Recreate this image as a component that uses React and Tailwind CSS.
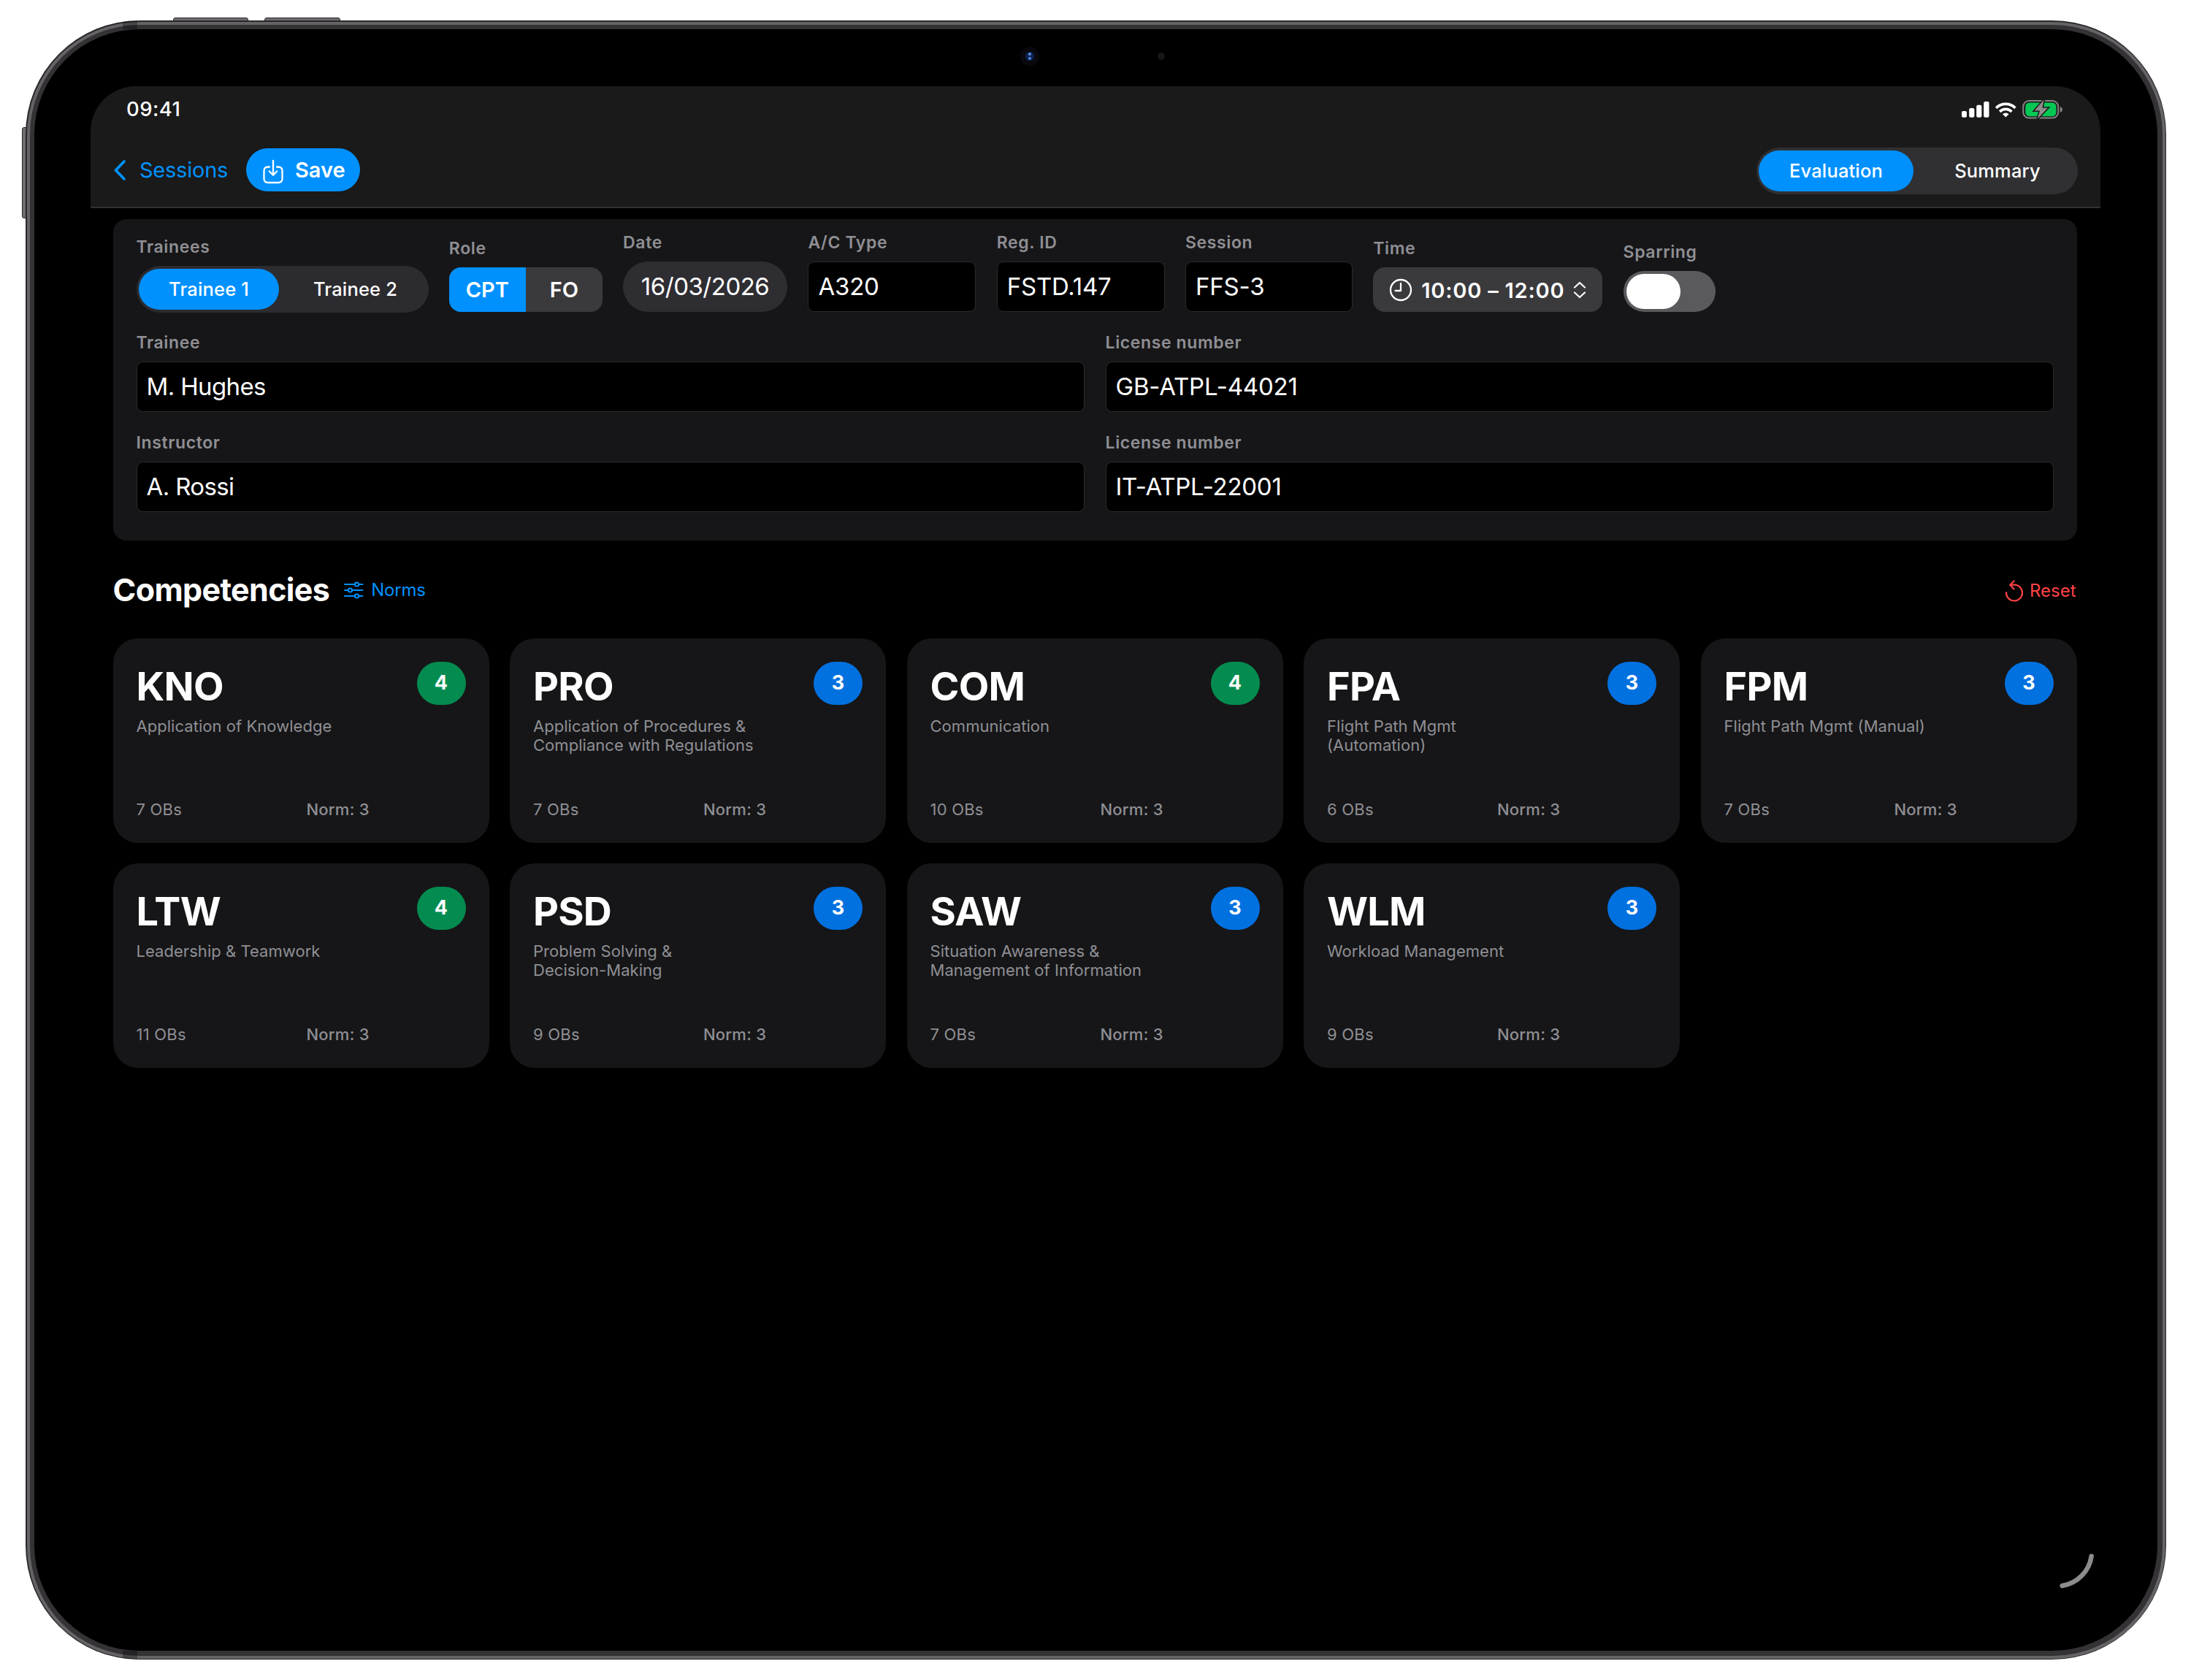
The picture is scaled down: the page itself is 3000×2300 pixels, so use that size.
import { useState } from "react";

const competencies = [
  { code: "KNO", name: ["Application of Knowledge"], obs: 7, norm: 3, grade: 4 },
  { code: "PRO", name: ["Application of Procedures &", "Compliance with Regulations"], obs: 7, norm: 3, grade: 3 },
  { code: "COM", name: ["Communication"], obs: 10, norm: 3, grade: 4 },
  { code: "FPA", name: ["Flight Path Mgmt", "(Automation)"], obs: 6, norm: 3, grade: 3 },
  { code: "FPM", name: ["Flight Path Mgmt (Manual)"], obs: 7, norm: 3, grade: 3 },
  { code: "LTW", name: ["Leadership & Teamwork"], obs: 11, norm: 3, grade: 4 },
  { code: "PSD", name: ["Problem Solving &", "Decision-Making"], obs: 9, norm: 3, grade: 3 },
  { code: "SAW", name: ["Situation Awareness &", "Management of Information"], obs: 7, norm: 3, grade: 3 },
  { code: "WLM", name: ["Workload Management"], obs: 9, norm: 3, grade: 3 },
];

function StatusIcons() {
  return (
    <svg width="140" height="28" viewBox="0 0 140 28" fill="none">
      <g fill="#fff">
        <rect x="0" y="17" width="7" height="8.7" rx="2" />
        <rect x="10.2" y="13" width="7.2" height="12.7" rx="2" />
        <rect x="20.2" y="8.7" width="7.2" height="17" rx="2" />
        <rect x="30.2" y="4" width="7.3" height="21.7" rx="2" />
      </g>
      <g stroke="#fff" strokeWidth="3.8">
        <path d="M47.2 12.8 A18.5 18.5 0 0 1 73.4 12.8" />
        <path d="M52.2 17.8 A11.5 11.5 0 0 1 68.4 17.8" />
      </g>
      <path d="M56 21.2 A6.2 6.2 0 0 1 64.6 21.2 L60.3 25.6 Z" fill="#fff" />
      <rect x="84.2" y="3" width="48" height="23.6" rx="8" stroke="#858282" strokeWidth="2" />
      <rect x="87.3" y="5.5" width="42.2" height="18.8" rx="5.5" fill="#04c853" />
      <path d="M134.6 11 q3.4 1.2 3.4 4 q0 2.8 -3.4 4 Z" fill="#858282" />
      <path d="M112.6 1.6 L99.6 16.4 H107 L103.8 27.6 L118 12.8 H110.4 Z" fill="#8f8c8c" stroke="#1a1a1a" strokeWidth="3" paintOrder="stroke" />
    </svg>
  );
}

function SaveIcon() {
  return (
    <svg className="mt-[4px]" width="28" height="34" viewBox="0 0 28 34" fill="none" stroke="#fff" strokeWidth="2.3" strokeLinecap="round" strokeLinejoin="round">
      <path d="M9 10.5 H7 Q1.5 10.5 1.5 16 V26.5 Q1.5 32 7 32 H21 Q26.5 32 26.5 26.5 V16 Q26.5 10.5 21 10.5 H19" />
      <path d="M14 2 V21.5 M8.8 16.5 L14 21.7 L19.2 16.5" />
    </svg>
  );
}

function ClockIcon() {
  return (
    <svg width="32" height="32" viewBox="0 0 32 32" fill="none" stroke="#fff" strokeWidth="2.3" strokeLinecap="round" strokeLinejoin="round">
      <circle cx="16" cy="16" r="14" />
      <path d="M16 7 V17 H8.5" />
    </svg>
  );
}

function SlidersIcon() {
  return (
    <svg width="28" height="24" viewBox="0 0 28 24" fill="none" stroke="#0091ff" strokeWidth="2" strokeLinecap="round">
      <path d="M2 4 H15.5 M21.5 4 H26.5 M2 12 H6.5 M12.5 12 H26.5 M2 20 H15.5 M21.5 20 H26.5" />
      <circle cx="18.5" cy="4" r="2.6" />
      <circle cx="9.5" cy="12" r="2.6" />
      <circle cx="18.5" cy="20" r="2.6" />
    </svg>
  );
}

function ResetIcon() {
  return (
    <svg width="26" height="30" viewBox="0 0 26 30" fill="none" stroke="#ff4245" strokeWidth="2.2" strokeLinecap="round" strokeLinejoin="round">
      <path d="M2 17 A11 11 0 1 0 13 6.5 L7.5 6.8" />
      <path d="M12.5 1.5 L7.5 6.8 L12.5 12.5" />
    </svg>
  );
}

function Segmented({ options, value, onChange, className, firstClass }) {
  return (
    <div className={`flex h-16 rounded-full py-1 pl-[3px] text-[25.5px] leading-none font-medium tracking-[0.006em] text-white ${className}`}>
      {options.map((option, i) => (
        <button
          key={option}
          onClick={() => onChange(option)}
          className={`flex h-14 items-center justify-center rounded-full ${i === 0 ? firstClass : "flex-1 pl-[5px]"} ${option === value ? "bg-[#0091ff]" : ""}`}
        >
          {option}
        </button>
      ))}
    </div>
  );
}

function Labeled({ label, className = "", children }) {
  return (
    <div className={`flex flex-col ${className}`}>
      <div className="mb-[12px] text-[23px] leading-7 font-semibold tracking-[0.027em] whitespace-nowrap text-[#8f8f94]">{label}</div>
      {children}
    </div>
  );
}

function Field({ label, value, className = "", textClass = "tracking-[-0.006em]" }) {
  return (
    <Labeled label={label} className={className}>
      <div className={`flex h-[69px] items-center rounded-[9px] border border-[#2b2b2d] bg-black px-[13px] text-[33px] whitespace-nowrap text-white ${textClass}`}>
        {value}
      </div>
    </Labeled>
  );
}

function CompetencyCard({ code, name, obs, norm, grade }) {
  return (
    <div className="flex h-[280px] flex-col rounded-[34px] bg-[#161618] px-8 pt-8 pb-[33px]">
      <div className="flex items-start justify-between">
        <div className="mt-[7px] text-[54px] leading-[54px] font-bold tracking-[-0.014em] text-white">{code}</div>
        <div
          className={`flex h-[59px] w-[67px] items-center justify-center rounded-full text-[27px] font-bold text-white ${grade >= 4 ? "bg-[#048c50]" : "bg-[#0271e0]"}`}
        >
          {grade}
        </div>
      </div>
      <div className="mt-[14px] text-[22px] leading-[26px] tracking-[0.002em] text-[#8f8f94]">
        {name.map((line) => (
          <div key={line} className="whitespace-nowrap">{line}</div>
        ))}
      </div>
      <div className="mt-auto flex text-[22px] leading-[26px] text-[#8f8f94]">
        <div className="w-[233px] tracking-[0.01em]">{obs} OBs</div>
        <div className="font-medium tracking-[0.01em]">Norm: {norm}</div>
      </div>
    </div>
  );
}

export default function App() {
  const [view, setView] = useState("Evaluation");
  const [trainee, setTrainee] = useState("Trainee 1");
  const [role, setRole] = useState("CPT");

  return (
    <div className="relative h-[2300px] w-[3000px] overflow-hidden bg-white px-[35px] pt-[28px] font-['Inter','Liberation_Sans',sans-serif]">
      {/* hardware buttons */}
      <div className="absolute top-[24px] left-[237px] h-2 w-[103px] rounded-t-[3px] border border-[#2b292b] bg-[#6f6d70]" />
      <div className="absolute top-[24px] left-[362px] h-2 w-[104px] rounded-t-[3px] border border-[#2b292b] bg-[#6f6d70]" />
      <div className="absolute top-[174px] left-[30px] h-[125px] w-2 rounded-l-[3px] border border-[#2b292b] bg-[#6f6d70]" />

      {/* metal frame */}
      <div className="relative h-[2244px] w-[2931px] overflow-hidden rounded-[156px] bg-[#29272a] p-[1.5px]">
        <div className="h-full w-full rounded-[154px] bg-[#656366] p-1">
          <div className="h-full w-full rounded-[150px] bg-[#343235] p-[6.5px]">
            <div className="h-full w-full rounded-[144px] bg-black px-[77px] pt-[78px]">
              <div className="h-[2064px] w-[2752px] overflow-hidden rounded-[62px] bg-black">
                <header className="h-[167px] border-b-2 border-[#323234] bg-[#1a1a1a]">
                  <div className="flex h-[62px] items-center justify-between pr-[50px] pl-[49px]">
                    <div className="pt-px text-[27.5px] leading-none font-medium tracking-[0.015em] text-white">09:41</div>
                    <StatusIcons />
                  </div>
                  <div className="flex items-start justify-between pt-[22px] pr-[31px] pl-[31px]">
                    <div className="mt-px flex items-center">
                      <svg width="18" height="30" viewBox="0 0 18 30" fill="none" stroke="#0091ff" strokeWidth="3.8" strokeLinecap="round" strokeLinejoin="round">
                        <path d="M15 3 L3.5 15 L15 27" />
                      </svg>
                      <div className="ml-[18px] w-[122px] text-[29px] leading-none tracking-[-0.008em] whitespace-nowrap text-[#0091ff]">Sessions</div>
                      <button className="ml-[24px] flex h-[59px] w-[156px] items-center rounded-full bg-[#0091ff] pl-[23px] text-[29px] leading-none font-semibold text-white">
                        <SaveIcon />
                        <span className="ml-[16px]">Save</span>
                      </button>
                    </div>
                    <Segmented options={["Evaluation", "Summary"]} value={view} onChange={setView} className="w-[440px] bg-[#303033]" firstClass="w-[212px]" />
                  </div>
                </header>

                <main className="pt-[15px] pl-[30.5px]">
                  <section className="flex h-[440px] w-[2689px] flex-col gap-7 rounded-[18px] bg-[#161618] px-8 pt-[18px]">
                    <div className="flex items-end gap-[28.3px]">
                      <Labeled label="Trainees" className="-mb-px">
                        <Segmented options={["Trainee 1", "Trainee 2"]} value={trainee} onChange={setTrainee} className="w-[400px] bg-[#2c2b2f]" firstClass="w-[192px] pl-px" />
                      </Labeled>
                      <Labeled label="Role">
                        <div className="flex h-[61px] w-[210px] overflow-hidden rounded-[16px] bg-[#3a3a3c] text-[29px] font-semibold text-white">
                          {["CPT", "FO"].map((r) => (
                            <button
                              key={r}
                              onClick={() => setRole(r)}
                              className={`flex flex-1 items-center justify-center ${r === role ? "bg-[#0091ff]" : ""}`}
                            >
                              {r}
                            </button>
                          ))}
                        </div>
                      </Labeled>
                      <Labeled label="Date">
                        <div className="flex h-[69px] w-[225px] items-center justify-center rounded-full bg-[#2e2d32] text-[33px] tracking-[-0.015em] text-white">16/03/2026</div>
                      </Labeled>
                      <Field label="A/C Type" value="A320" className="w-[230px]" />
                      <Field label="Reg. ID" value="FSTD.147" className="w-[230px]" />
                      <Field label="Session" value="FFS-3" className="w-[229px]" />
                      <Labeled label="Time">
                        <div className="flex h-[61px] w-[314px] items-center rounded-[16px] bg-[#3a3a3d] pl-[22px] text-[29px] font-semibold tracking-[0.027em] whitespace-nowrap text-white">
                          <ClockIcon />
                          <span className="ml-[12px] w-[208px] pt-[2px]">10:00 – 12:00</span>
                          <svg width="18" height="24" viewBox="0 0 18 24" fill="none" stroke="#fff" strokeWidth="2.2" strokeLinecap="round" strokeLinejoin="round">
                            <path d="M2 8.5 L9 2 L16 8.5 M2 15.5 L9 22 L16 15.5" />
                          </svg>
                        </div>
                      </Labeled>
                      <Labeled label="Sparring">
                        <div className="flex h-14 w-[126px] items-center rounded-full bg-[#5a5a5e] pl-1">
                          <div className="h-12 w-[74px] rounded-full bg-white" />
                        </div>
                      </Labeled>
                    </div>
                    <div className="grid grid-cols-2 gap-x-[29px] gap-y-7">
                      <Field label="Trainee" value="M. Hughes" textClass="tracking-[-0.019em]" />
                      <Field label="License number" value="GB-ATPL-44021" />
                      <Field label="Instructor" value="A. Rossi" textClass="tracking-[-0.019em]" />
                      <Field label="License number" value="IT-ATPL-22001" textClass="tracking-[-0.008em]" />
                    </div>
                  </section>

                  <div className="flex h-[134px] w-[2689px] items-center">
                    <h2 className="text-[43px] leading-none font-bold tracking-[-0.015em] text-white">Competencies</h2>
                    <div className="mt-[2px] ml-[19px] flex items-center gap-[10px] text-[24px] leading-none tracking-[-0.01em] text-[#0091ff]">
                      <SlidersIcon />
                      Norms
                    </div>
                    <div className="mt-[3px] mr-px ml-auto flex items-center gap-[8px] text-[24px] leading-none text-[#ff4245]">
                      <ResetIcon />
                      Reset
                    </div>
                  </div>

                  <section className="grid w-[2689px] grid-cols-5 gap-x-[28.5px] gap-y-7">
                    {competencies.map((c) => (
                      <CompetencyCard key={c.code} {...c} />
                    ))}
                  </section>
                </main>
              </div>
            </div>
          </div>
        </div>

        {/* antenna bands */}
        <div className="absolute top-0 left-[133px] h-3 w-5 bg-black/30" />
        <div className="absolute bottom-0 left-[133px] h-3 w-5 bg-black/30" />
      </div>

      {/* front camera and microphone */}
      <div className="absolute top-[64px] left-[1397px] flex h-[26px] w-[26px] items-center justify-center rounded-full bg-[#08080e]">
        <div className="flex h-3 w-3 flex-col items-center justify-between rounded-full bg-[#0d2350] py-px">
          <div className="h-1 w-1 rounded-full bg-[#5f8fe8]" />
          <div className="h-1 w-1 rounded-full bg-[#4a86e0]" />
        </div>
      </div>
      <div className="absolute top-[72px] left-[1585px] h-[10px] w-[10px] rounded-full bg-[#171717]" />

      {/* corner hint */}
      <svg className="absolute top-[2120px] left-[2810px]" width="64" height="64" viewBox="0 0 64 64" fill="none">
        <path d="M53.7 10.5 A48 48 0 0 1 13.7 51" stroke="#8c8c8c" strokeWidth="6.5" strokeLinecap="round" />
      </svg>
    </div>
  );
}
